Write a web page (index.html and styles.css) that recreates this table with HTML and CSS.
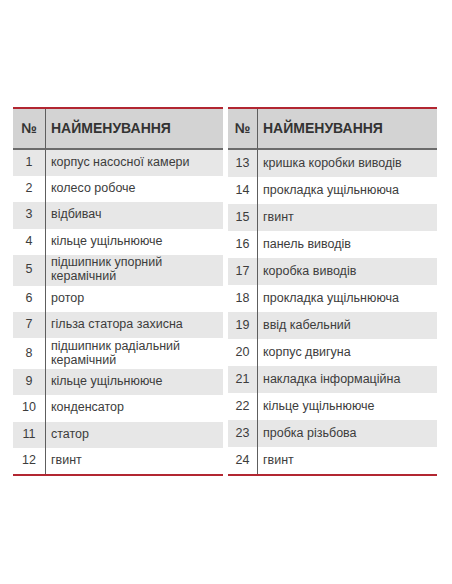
FILE: index.html
```html
<!DOCTYPE html>
<html lang="uk">
<head>
<meta charset="utf-8">
<link rel="stylesheet" href="styles.css">
</head>
<body>
<div class="wrap">
  <table class="parts parts-left">
    <thead>
      <tr><th class="num">№</th><th class="name">НАЙМЕНУВАННЯ</th></tr>
    </thead>
    <tbody>
      <tr><td class="num">1</td><td class="name">корпус насосної камери</td></tr>
      <tr><td class="num">2</td><td class="name">колесо робоче</td></tr>
      <tr><td class="num">3</td><td class="name">відбивач</td></tr>
      <tr><td class="num">4</td><td class="name">кільце ущільнююче</td></tr>
      <tr class="tall"><td class="num">5</td><td class="name">підшипник упорний<br>керамічний</td></tr>
      <tr><td class="num">6</td><td class="name">ротор</td></tr>
      <tr><td class="num">7</td><td class="name">гільза статора захисна</td></tr>
      <tr class="tall"><td class="num">8</td><td class="name">підшипник радіальний<br>керамічний</td></tr>
      <tr><td class="num">9</td><td class="name">кільце ущільнююче</td></tr>
      <tr><td class="num">10</td><td class="name">конденсатор</td></tr>
      <tr><td class="num">11</td><td class="name">статор</td></tr>
      <tr><td class="num">12</td><td class="name">гвинт</td></tr>
    </tbody>
  </table>
  <table class="parts parts-right">
    <thead>
      <tr><th class="num">№</th><th class="name">НАЙМЕНУВАННЯ</th></tr>
    </thead>
    <tbody>
      <tr><td class="num">13</td><td class="name">кришка коробки виводів</td></tr>
      <tr><td class="num">14</td><td class="name">прокладка ущільнююча</td></tr>
      <tr><td class="num">15</td><td class="name">гвинт</td></tr>
      <tr><td class="num">16</td><td class="name">панель виводів</td></tr>
      <tr><td class="num">17</td><td class="name">коробка виводів</td></tr>
      <tr><td class="num">18</td><td class="name">прокладка ущільнююча</td></tr>
      <tr><td class="num">19</td><td class="name">ввід кабельний</td></tr>
      <tr><td class="num">20</td><td class="name">корпус двигуна</td></tr>
      <tr><td class="num">21</td><td class="name">накладка інформаційна</td></tr>
      <tr><td class="num">22</td><td class="name">кільце ущільнююче</td></tr>
      <tr><td class="num">23</td><td class="name">пробка різьбова</td></tr>
      <tr><td class="num">24</td><td class="name">гвинт</td></tr>
    </tbody>
  </table>
</div>
</body>
</html>
```
FILE: styles.css
```css
html, body {
  margin: 0;
  padding: 0;
  background: #ffffff;
}
body {
  font-family: "Liberation Sans", Arial, sans-serif;
  color: #3c3c3c;
}
.wrap {
  display: flex;
  align-items: flex-start;
  gap: 5px;
  padding: 107px 0 0 13px;
}
.parts {
  border-collapse: separate;
  border-spacing: 0;
  border-top: 2px solid #b22631;
  border-bottom: 2px solid #b22631;
  table-layout: fixed;
}
.parts-left { width: 210px; }
.parts-right { width: 209px; }
.parts-left .num { width: 32px; }
.parts-right .num { width: 29px; }
.parts thead tr { height: 41px; }
.parts th {
  background: #d3d3d3;
  padding: 0 0 1px 0;
  border-bottom: 2px solid #6b6b6b;
  font-weight: bold;
  font-size: 14px;
  color: #333333;
  text-align: left;
}
.parts th.num { text-align: center; }
.parts tbody tr { height: 26.2px; }
.parts-right tbody tr { height: 27px; }
.parts tbody tr.tall { height: 31px; }
.parts td {
  padding: 0 0 2px 0;
  font-size: 12.5px;
  line-height: 14px;
  vertical-align: middle;
}
.parts .num {
  text-align: center;
  border-right: 1px solid #5e5e5e;
  padding-left: 0;
  padding-right: 0;
}
.parts .name {
  padding-left: 5px;
}
.parts tbody tr:nth-child(odd) td {
  background: #e7e7e7;
}
```
